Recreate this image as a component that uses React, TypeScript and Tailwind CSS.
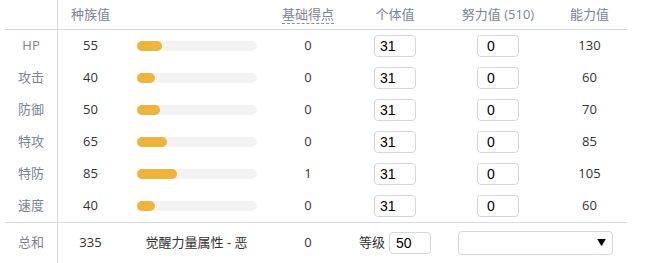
import React from "react"

const stats = [
  { label: "HP", base: 55, ev: 0, value: 130 },
  { label: "攻击", base: 40, ev: 0, value: 60 },
  { label: "防御", base: 50, ev: 0, value: 70 },
  { label: "特攻", base: 65, ev: 0, value: 85 },
  { label: "特防", base: 85, ev: 1, value: 105 },
  { label: "速度", base: 40, ev: 0, value: 60 },
]

const cols = "grid grid-cols-[53px_65px_147px_76px_98px_108px_75px]"
const input =
  "h-[22px] w-[42px] rounded-[4px] border border-[#d3d6de] bg-white text-[14px] text-black outline-none font-['Liberation_Sans',Arial,sans-serif]"

export default function App() {
  return (
    <div className="h-[263px] w-[650px] bg-white font-['Open_Sans','Noto_Sans_CJK_SC',sans-serif] text-[13px] text-[#333]">
      <div className="ml-[5px] w-[622px]">
        {/* Header */}
        <div className={`${cols} h-[30px] items-center border-b border-[#d8dae2] text-[#7d8292]`}>
          <div className="h-full border-r border-[#d8dae2]" />
          <div className="text-center">种族值</div>
          <div />
          <div className="flex justify-center">
            <span className="border-b border-dashed border-[#8a8f9d] leading-[17px]">基础得点</span>
          </div>
          <div className="text-center">个体值</div>
          <div className="text-center">努力值 (510)</div>
          <div className="text-center">能力值</div>
        </div>

        {/* Stat rows */}
        <div className="border-b border-[#d8dae2]">
          {stats.map((s) => (
            <div key={s.label} className={`${cols} h-[32px] items-center`}>
              <div className="flex h-full items-center justify-center border-r border-[#d8dae2] text-[#7d8292]">
                {s.label}
              </div>
              <div className="text-center">{s.base}</div>
              <div className="flex justify-center">
                <div className="h-[10px] w-[120px] rounded-full bg-[#f3f3f3]">
                  <div
                    className="h-full rounded-full bg-[#f0b43c]"
                    style={{ width: `${(s.base / 255) * 120}px` }}
                  />
                </div>
              </div>
              <div className="text-center">{s.ev}</div>
              <div className="flex justify-center">
                <input className={`${input} pl-[5px]`} defaultValue="31" />
              </div>
              <div className="flex justify-center">
                <input className={`${input} pl-[9px]`} defaultValue="0" />
              </div>
              <div className="text-center">{s.value}</div>
            </div>
          ))}
        </div>

        {/* Total row */}
        <div className={`${cols} h-[40px] items-center`}>
          <div className="flex h-full items-center justify-center border-r border-[#d8dae2] text-[#7d8292]">
            总和
          </div>
          <div className="text-center">335</div>
          <div className="text-center">觉醒力量属性 - 恶</div>
          <div className="text-center">0</div>
          <div className="flex items-center justify-center gap-[4px]">
            <span>等级</span>
            <input className={`${input} pl-[6px]`} defaultValue="50" />
          </div>
          <div className="col-span-2 flex justify-center">
            <div className="flex h-[24px] w-[155px] items-center justify-end rounded-[4px] border border-[#d3d6de] pr-[6px] text-[9px] text-black">
              ▼
            </div>
          </div>
        </div>
      </div>
    </div>
  )
}
